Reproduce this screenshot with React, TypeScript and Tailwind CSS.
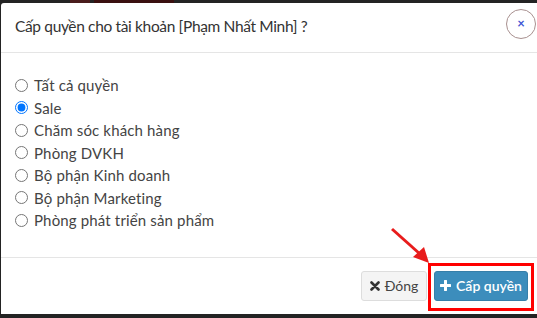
import React from "react";

const items = [
  "Tất cả quyền",
  "Sale",
  "Chăm sóc khách hàng",
  "Phòng DVKH",
  "Bộ phận Kinh doanh",
  "Bộ phận Marketing",
  "Phòng phát triển sản phẩm",
];

export default function App() {
  return (
    <div
      className="relative w-[537px] h-[318px] overflow-hidden bg-[#232323] flex flex-col"
      style={{ fontFamily: "Lato, 'Noto Sans', sans-serif" }}
    >
      <div className="h-[3px] flex shrink-0">
        <div className="w-[70px]" />
        <div className="w-[20px] bg-[#4a1c1c]" />
        <div className="w-[4px]" />
        <div className="w-[80px] bg-[#3a1010]" />
      </div>
      <div className="flex flex-1">
        <div className="w-[1px] bg-[#232323] shrink-0" />
        <div className="flex-1 bg-white rounded-tl-[3px] flex flex-col h-[311px]">
          <div className="h-[50px] flex items-center justify-between pl-[14px] pr-[1px] border-b border-[#e5e5e5]">
            <div className="text-[15.5px] tracking-[-0.35px] text-[#333] leading-none pb-[1px]">
              Cấp quyền cho tài khoản [Phạm Nhất Minh] ?
            </div>
            <div className="w-[30px] h-[30px] rounded-full border border-[#a8908f] flex items-center justify-center text-[#3e55d4] text-[13px] font-bold leading-none mb-[8px]">
              ×
            </div>
          </div>
          <div className="pl-[14px] pt-[21px] pb-[25px] flex flex-col">
            {items.map((t, i) => (
              <label
                key={t}
                className="flex items-center h-[22.5px] text-[15px] tracking-[0.15px] text-[#444]"
              >
                <input
                  type="radio"
                  name="perm"
                  defaultChecked={i === 1}
                  className="m-0 w-[13px] h-[13px] ml-[0px] mr-[6px]"
                />
                <span>{t}</span>
              </label>
            ))}
          </div>
          <div className="border-t border-[#e5e5e5] flex justify-end items-start pt-[13px] pr-[9px] gap-[7px] flex-1">
            <button className="h-[30px] w-[66px] flex items-center justify-center gap-[5px] bg-[#f4f4f4] border border-[#ddd] rounded-[3px] text-[#444] text-[14px]">
              <svg width="10" height="10" viewBox="0 0 10 10">
                <path d="M1.5 1.5 L8.5 8.5 M8.5 1.5 L1.5 8.5" stroke="#333" strokeWidth="2.6" strokeLinecap="round" />
              </svg>
              <span>Đóng</span>
            </button>
            <div className="relative">
              <button className="h-[30px] w-[94px] flex items-center justify-center gap-[5px] bg-[#3c8dbc] border border-[#367fa9] rounded-[3px] text-white text-[14px] font-semibold">
                <svg width="11" height="11" viewBox="0 0 11 11">
                  <path d="M5.5 1 V10 M1 5.5 H10" stroke="#fff" strokeWidth="3" strokeLinecap="round" />
                </svg>
                <span>Cấp quyền</span>
              </button>
              <div className="absolute left-[-6px] right-[-6px] top-[-8px] bottom-[-10px] border-[3px] border-[#f00] pointer-events-none" />
            </div>
          </div>
        </div>
      </div>
      <svg
        className="absolute left-0 top-0 pointer-events-none"
        width="537"
        height="318"
      >
        <line x1="392" y1="229" x2="420" y2="254" stroke="#e81c1c" strokeWidth="3" />
        <polygon points="429,263 413,257 424,247" fill="#e81c1c" />
      </svg>
    </div>
  );
}
